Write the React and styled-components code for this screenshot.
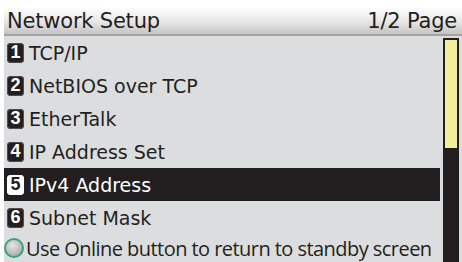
import React from 'react';
import styled, { createGlobalStyle } from 'styled-components';

const GlobalStyle = createGlobalStyle`
  html, body {
    margin: 0;
    padding: 0;
    background: #ffffff;
  }
`;

const Screen = styled.div`
  width: 462px;
  height: 262px;
  padding: 7px 0 0 4px;
  box-sizing: border-box;
  overflow: hidden;
  font-family: 'DejaVu Sans', Verdana, sans-serif;
  color: #231f20;
`;

const Panel = styled.div`
  width: 458px;
  height: 255px;
  background: #dcddde;
  display: flex;
  flex-direction: column;
`;

const Header = styled.div`
  height: 27px;
  display: flex;
  align-items: center;
  justify-content: space-between;
  padding: 0 5px 0 3px;
  background: linear-gradient(#ffffff, #e6e6e6 55%, #c4c4c4);
  border-bottom: 2px solid #a3a3a3;
  font-size: 21px;
  letter-spacing: -0.2px;
`;

const Body = styled.div`
  flex: 1;
  display: flex;
  gap: 3px;
`;

const List = styled.div`
  width: 436px;
  display: flex;
  flex-direction: column;
`;

const Row = styled.div`
  height: 33px;
  display: flex;
  align-items: center;
  gap: 5px;
  padding-left: 3px;
  font-size: 19px;
  background: ${(p) => (p.$active ? '#231f20' : 'transparent')};
  color: ${(p) => (p.$active ? '#ffffff' : '#231f20')};
`;

const Badge = styled.span`
  width: 17px;
  height: 20px;
  border-radius: 4px;
  display: flex;
  align-items: center;
  justify-content: center;
  font-family: 'Liberation Sans', Arial, sans-serif;
  font-weight: bold;
  font-size: 18px;
  background: ${(p) => (p.$active ? '#ffffff' : '#231f20')};
  color: ${(p) => (p.$active ? '#231f20' : '#ffffff')};
  box-shadow: inset 0 0 0 1px ${(p) => (p.$active ? '#ffffff' : '#514c4d')};
`;

const Footer = styled.div`
  height: 28px;
  display: flex;
  align-items: center;
  gap: 2px;
  font-family: 'Open Sans', sans-serif;
  font-size: 20px;
  letter-spacing: -0.55px;
  white-space: nowrap;
  overflow: hidden;
`;

const Led = styled.span`
  width: 16px;
  height: 16px;
  border-radius: 50%;
  border: 2px solid #3aa184;
  background: radial-gradient(circle at 40% 35%, #e6e6e6, #9c9c9c);
  flex-shrink: 0;
`;

const Track = styled.div`
  width: 16px;
  margin-top: 2px;
  background: #231f20;
  padding: 2px;
  box-sizing: border-box;
`;

const Thumb = styled.div`
  height: 108px;
  background: #efef9a;
`;

const items = ['TCP/IP', 'NetBIOS over TCP', 'EtherTalk', 'IP Address Set', 'IPv4 Address', 'Subnet Mask'];

export default function App() {
  return (
    <>
      <GlobalStyle />
      <Screen>
        <Panel>
          <Header>
            <span>Network Setup</span>
            <span>1/2 Page</span>
          </Header>
          <Body>
            <List>
              {items.map((label, i) => (
                <Row key={label} $active={i === 4}>
                  <Badge $active={i === 4}>{i + 1}</Badge>
                  {label}
                </Row>
              ))}
              <Footer>
                <Led />
                Use Online button to return to standby screen
              </Footer>
            </List>
            <Track>
              <Thumb />
            </Track>
          </Body>
        </Panel>
      </Screen>
    </>
  );
}
